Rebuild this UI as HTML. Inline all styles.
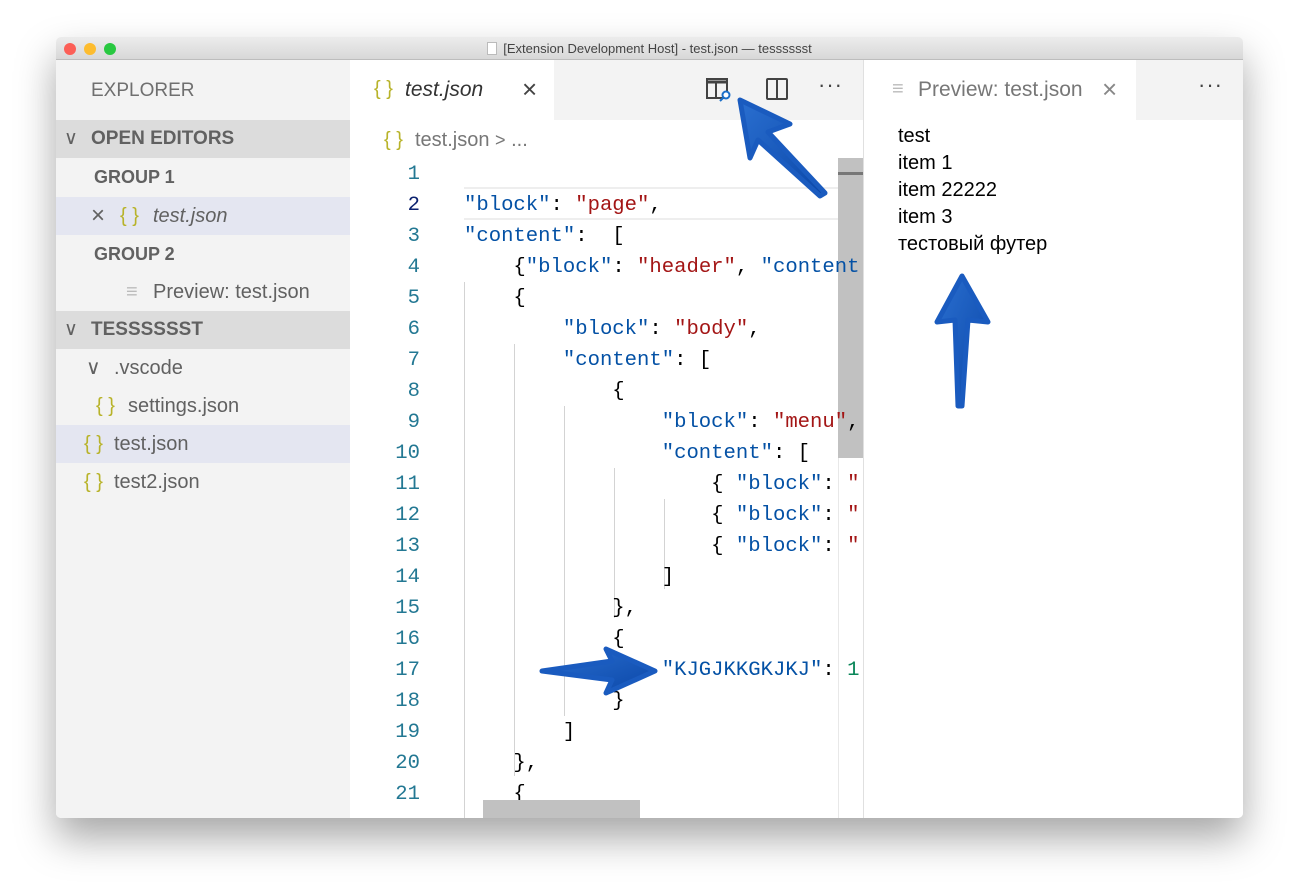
<!DOCTYPE html>
<html><head><meta charset="utf-8"><style>
*{margin:0;padding:0;box-sizing:border-box}
body{width:1299px;height:892px;background:#fff;position:relative;overflow:hidden;font-family:"Liberation Sans","DejaVu Sans",sans-serif}
.a{position:absolute;white-space:nowrap}
.win{position:absolute;left:56px;top:37px;width:1187px;height:781px;background:#fff;box-shadow:0 20px 40px rgba(0,0,0,.35);border-radius:5px;overflow:hidden}
.title{position:absolute;left:0;top:0;width:1187px;height:23px;background:linear-gradient(#ececec,#d8d8d8);border-bottom:1px solid #bdbdbd;font-size:13px;color:#444;text-align:center;line-height:23px}
.dot{position:absolute;top:6px;width:12px;height:12px;border-radius:50%}
.side{position:absolute;left:0;top:23px;width:294px;height:758px;background:#f3f3f3}
.row{position:absolute;left:0;width:294px;height:38px;font-size:20px;color:#616161;line-height:38px}
.hdr{background:#dcdcdc;font-weight:bold;font-size:19px;color:#616161}
.br{color:#b8b32a;font-family:"Liberation Sans",sans-serif}
.ed{position:absolute;left:294px;top:23px;width:513px;height:758px;background:#fff;overflow:hidden}
.code{font-family:"Liberation Mono","DejaVu Sans Mono",monospace;font-size:20.6px;line-height:31px;white-space:pre}
.k{color:#0451a5}.s{color:#a31515}.n{color:#098658}
.guide{position:absolute;width:1px;background:#d3d3d3}
</style></head><body>
<div class="win">
 <div class="title"><span style="display:inline-block;width:10px;height:13px;background:#fff;border:1px solid #bbb;vertical-align:-2px;margin-right:6px"></span>[Extension Development Host] - test.json — tesssssst</div>
 <div class="dot" style="left:8px;background:#fc5f57"></div>
 <div class="dot" style="left:28px;background:#fdbc2e"></div>
 <div class="dot" style="left:48px;background:#28c840"></div>

 <div class="side">
  <div class="a" style="left:35px;top:20px;font-size:19px;color:#6f6f6f">EXPLORER</div>
  <div class="row hdr" style="top:60px"><span class="a" style="left:8px;font-weight:normal">∨</span><span class="a" style="left:35px">OPEN EDITORS</span></div>
  <div class="row" style="top:98px;font-weight:bold;font-size:18px"><span class="a" style="left:38px">GROUP 1</span></div>
  <div class="row" style="top:137px;background:#e4e6f1"><span class="a" style="left:35px;font-size:24px">×</span><span class="a br" style="left:64px">{ }</span><span class="a" style="left:97px;font-style:italic">test.json</span></div>
  <div class="row" style="top:175px;font-weight:bold;font-size:18px"><span class="a" style="left:38px">GROUP 2</span></div>
  <div class="row" style="top:213px"><span class="a" style="left:70px;color:#bbb">≡</span><span class="a" style="left:97px">Preview: test.json</span></div>
  <div class="row hdr" style="top:251px"><span class="a" style="left:8px;font-weight:normal">∨</span><span class="a" style="left:35px">TESSSSSST</span></div>
  <div class="row" style="top:289px"><span class="a" style="left:30px">∨</span><span class="a" style="left:58px">.vscode</span></div>
  <div class="row" style="top:327px"><span class="a br" style="left:40px">{ }</span><span class="a" style="left:72px">settings.json</span></div>
  <div class="row" style="top:365px;background:#e4e6f1"><span class="a br" style="left:28px">{ }</span><span class="a" style="left:58px">test.json</span></div>
  <div class="row" style="top:403px"><span class="a br" style="left:28px">{ }</span><span class="a" style="left:58px">test2.json</span></div>
 </div>

 <div class="ed">
  <div class="a" style="left:0;top:0;width:513px;height:60px;background:#f3f3f3"></div>
  <div class="a" style="left:0;top:0;width:204px;height:60px;background:#fff"></div>
  <div class="a br" style="left:24px;top:18px;font-size:20px">{ }</div>
  <div class="a" style="left:55px;top:18px;font-size:21px;font-style:italic;color:#333">test.json</div>
  <div class="a" style="left:172px;top:14px;font-size:26px;color:#444">×</div>
  <svg class="a" style="left:356px;top:18px" width="26" height="24"><rect x="1" y="1" width="20" height="19" fill="none" stroke="#424242" stroke-width="2"/><line x1="1" y1="4" x2="21" y2="4" stroke="#424242" stroke-width="3"/><line x1="10" y1="4" x2="10" y2="20" stroke="#424242" stroke-width="2"/><circle cx="20" cy="17" r="3.5" fill="#fff" stroke="#1a6fc9" stroke-width="2"/><line x1="17" y1="20" x2="14" y2="23" stroke="#1a6fc9" stroke-width="2"/></svg>
  <svg class="a" style="left:416px;top:18px" width="24" height="24"><rect x="1" y="1" width="20" height="20" rx="1" fill="none" stroke="#424242" stroke-width="2"/><line x1="11" y1="1" x2="11" y2="21" stroke="#424242" stroke-width="2"/></svg>
  <div class="a" style="left:468px;top:12px;font-size:22px;color:#424242;letter-spacing:1px">···</div>
  <div class="a br" style="left:34px;top:69px;font-size:20px">{ }</div>
  <div class="a" style="left:65px;top:69px;font-size:20px;color:#777">test.json <span style="font-size:18px">&gt;</span> ...</div>
  <div class="a" style="left:488px;top:98px;width:25px;height:660px;border-left:1px solid #e8e8e8;background:#fff"></div>
  <div class="a" style="left:488px;top:98px;width:25px;height:300px;background:#c1c1c1"></div>
  <div class="a" style="left:488px;top:112px;width:25px;height:3px;background:#777"></div>
  <div class="a" style="left:114px;top:127px;width:374px;height:33px;border-top:2px solid #eee;border-bottom:2px solid #eee"></div>
  <div class="guide" style="left:114px;top:222px;height:540px"></div>
  <div class="guide" style="left:164px;top:284px;height:432px"></div>
  <div class="guide" style="left:214px;top:346px;height:310px"></div>
  <div class="guide" style="left:264px;top:408px;height:150px"></div>
  <div class="guide" style="left:314px;top:439px;height:90px"></div>
  <div class="a code" style="left:0;top:99px;width:70px;text-align:right;color:#237893">1
<span style="color:#0b216f">2</span>
3
4
5
6
7
8
9
10
11
12
13
14
15
16
17
18
19
20
21</div>
  <div class="a code" style="left:114px;top:99px;color:#000"> 
<span class="k">"block"</span>: <span class="s">"page"</span>,
<span class="k">"content"</span>:  [
    {<span class="k">"block"</span>: <span class="s">"header"</span>, <span class="k">"content</span>
    {
        <span class="k">"block"</span>: <span class="s">"body"</span>,
        <span class="k">"content"</span>: [
            {
                <span class="k">"block"</span>: <span class="s">"menu"</span>,
                <span class="k">"content"</span>: [
                    { <span class="k">"block"</span>: <span class="s">"</span>
                    { <span class="k">"block"</span>: <span class="s">"</span>
                    { <span class="k">"block"</span>: <span class="s">"</span>
                ]
            },
            {
                <span class="k">"KJGJKKGKJKJ"</span>: <span class="n">1</span>
            }
        ]
    },
    {</div>
  <div class="a" style="left:133px;top:740px;width:157px;height:18px;background:#c1c1c1"></div>
 </div>

 <div class="a" style="left:807px;top:23px;width:380px;height:758px;background:#fff;border-left:1px solid #e0e0e0">
  <div class="a" style="left:0;top:0;width:380px;height:60px;background:#f3f3f3"></div>
  <div class="a" style="left:0;top:0;width:272px;height:60px;background:#fff"></div>
  <div class="a" style="left:28px;top:18px;font-size:20px;color:#bbb">≡</div>
  <div class="a" style="left:54px;top:18px;font-size:21px;color:#777">Preview: test.json</div>
  <div class="a" style="left:238px;top:14px;font-size:26px;color:#888">×</div>
  <div class="a" style="left:334px;top:12px;font-size:22px;color:#424242;letter-spacing:1px">···</div>
  <div class="a" style="left:34px;top:63px;font-size:20px;line-height:27px;color:#000">test<br>item 1<br>item 22222<br>item 3<br>тестовый футер</div>
 </div>
</div>

<svg class="a" style="left:0;top:0" width="1299" height="892">
 <defs><linearGradient id="g" x1="0" y1="0" x2="1" y2="1"><stop offset="0" stop-color="#2a6fd0"/><stop offset="1" stop-color="#0b47a8"/></linearGradient></defs>
 <polygon points="740,100 790,124 768,132 825,193 820,196 758,140 750,158" fill="url(#g)" stroke="#1a5bbf" stroke-width="5" stroke-linejoin="round"/>
 <polygon points="962,276 988,322 968,320 962,406 958,406 955,320 937,322" fill="url(#g)" stroke="#1a5bbf" stroke-width="5" stroke-linejoin="round"/>
 <polygon points="655,671 606,649 612,661 542,671 612,680 606,693" fill="url(#g)" stroke="#1a5bbf" stroke-width="5" stroke-linejoin="round"/>
</svg>
</body></html>
